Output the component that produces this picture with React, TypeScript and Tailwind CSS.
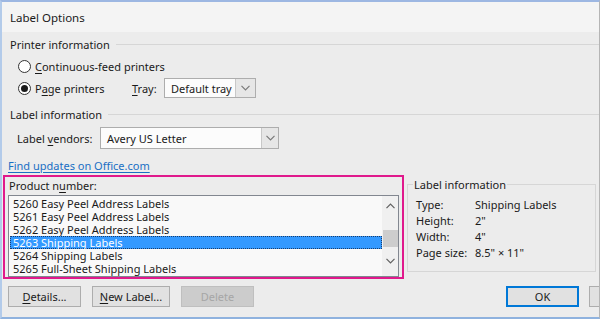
import React from 'react';

const font = { fontFamily: '"Noto Sans", "Liberation Sans", sans-serif' };

function Chevron({ dir = 'down', className = '' }: { dir?: 'up' | 'down'; className?: string }) {
  return (
    <svg width="9" height="6" viewBox="0 0 9 6" className={className}>
      {dir === 'down' ? (
        <polyline points="0.5,0.8 4.5,4.8 8.5,0.8" fill="none" stroke="currentColor" strokeWidth="1.2" />
      ) : (
        <polyline points="0.5,5.2 4.5,1.2 8.5,5.2" fill="none" stroke="currentColor" strokeWidth="1.2" />
      )}
    </svg>
  );
}

function Radio({ checked }: { checked?: boolean }) {
  return (
    <span className="flex h-[13px] w-[13px] items-center justify-center rounded-full border border-[#333333] bg-white">
      {checked && <span className="h-[7px] w-[7px] rounded-full bg-[#1a1a1a]" />}
    </span>
  );
}

function Select({ value, width, arrow }: { value: string; width: string; arrow: string }) {
  return (
    <div className={`flex h-full items-stretch border border-[#adadad] bg-[#fcfcfc] ${width}`}>
      <span className="flex flex-1 items-center whitespace-nowrap pl-[6px] text-[#1a1a1a]">{value}</span>
      <span className={`flex items-center justify-center border-l border-[#c8c8c8] bg-[#e6e6e6] text-[#7a7a7a] ${arrow}`}>
        <Chevron />
      </span>
    </div>
  );
}

function GroupHeader({ title }: { title: string }) {
  return (
    <div className="flex h-[18px] items-center pl-[8px]">
      <span className="text-[#1a1a1a]">{title}</span>
      <span className="ml-[6px] h-px flex-1 bg-[#d6d6d6]" />
    </div>
  );
}

function Button({ children, disabled, primary, width }: { children?: React.ReactNode; disabled?: boolean; primary?: boolean; width: string }) {
  const cls = disabled
    ? 'border border-[#bfbfbf] bg-[#cccccc] text-[#a6a6a6]'
    : primary
    ? 'border-2 border-[#0078d7] bg-[#e1e1e1] text-[#1a1a1a]'
    : 'border border-[#adadad] bg-[#e1e1e1] text-[#1a1a1a]';
  return (
    <div className={`flex h-[21px] shrink-0 items-center justify-center ${width} ${cls}`}>{children}</div>
  );
}

const products = [
  '5260 Easy Peel Address Labels',
  '5261 Easy Peel Address Labels',
  '5262 Easy Peel Address Labels',
  '5263 Shipping Labels',
  '5264 Shipping Labels',
  '5265 Full-Sheet Shipping Labels',
];

export default function App() {
  return (
    <div
      className="flex h-[319px] w-[600px] flex-col overflow-hidden border-t-2 border-l-2 border-r border-b-2 border-t-[#9db7e2] border-l-[#b3cbea] border-r-[#b5b5b5] border-b-[#8fb2de] bg-[#ececec] text-[11px] leading-[15px]"
      style={font}
    >
      {/* title bar */}
      <div className="flex h-[30px] shrink-0 items-center bg-[#f4f4f4] pl-[8px] text-[11.5px] text-[#1a1a1a]">
        Label Options
      </div>

      <div className="flex flex-1 flex-col">
        <div className="mt-[3px]">
          <GroupHeader title="Printer information" />
        </div>

        <div className="mt-[4px] flex h-[18px] items-center pl-[16px]">
          <Radio />
          <span className="ml-[4px] text-[#1a1a1a]">
            <span className="underline underline-offset-2">C</span>ontinuous-feed printers
          </span>
        </div>

        <div className="mt-[3px] flex h-[20px] items-center pl-[16px]">
          <Radio checked />
          <span className="ml-[4px] w-[97px] text-[#1a1a1a]">
            P<span className="underline underline-offset-2">a</span>ge printers
          </span>
          <span className="w-[32px] text-[#1a1a1a]">
            <span className="underline underline-offset-2">T</span>ray:
          </span>
          <div className="h-[20px]">
            <Select value="Default tray" width="w-[92px]" arrow="w-[20px]" />
          </div>
        </div>

        <div className="mt-[7px]">
          <GroupHeader title="Label information" />
        </div>

        <div className="mt-[4px] flex h-[22px] items-center pl-[15px]">
          <span className="w-[83px] text-[#1a1a1a]">
            Label <span className="underline underline-offset-2">v</span>endors:
          </span>
          <div className="h-[22px]">
            <Select value="Avery US Letter" width="w-[179px]" arrow="w-[17px]" />
          </div>
        </div>

        <div className="mt-[8px] flex h-[16px] items-center pl-[6px]">
          <span className="text-[#1a6fc4] underline underline-offset-2">Find updates on Office.com</span>
        </div>

        <div className="mt-[2px] flex h-[104px] items-start">
          {/* highlighted product list */}
          <div className="ml-[1px] flex h-[104px] w-[401px] flex-col border-2 border-[#e0198c] px-[3px]">
            <div className="flex h-[16px] items-center pl-[1px] pt-[1px] text-[#1a1a1a]">
              Product n<span className="underline underline-offset-2">u</span>mber:
            </div>
            <div className="mt-[2px] flex h-[82px] w-[391px] border border-[#828790] bg-[#f9f9f9]">
              <div className="flex flex-1 flex-col pl-[1px] pt-[1px]">
                {products.map((p, i) =>
                  i === 3 ? (
                    <div
                      key={p}
                      className="flex h-[13px] items-center whitespace-nowrap border border-dotted border-[#1a3d6b] bg-[#3399ff] pl-[2px] leading-[13px] text-white"
                    >
                      {p}
                    </div>
                  ) : (
                    <div key={p} className="flex h-[13px] items-center whitespace-nowrap pl-[3px] leading-[13px] text-[#1a1a1a]">
                      {p}
                    </div>
                  )
                )}
              </div>
              <div className="flex w-[16px] flex-col items-center bg-[#f0f0f0] text-[#606060]">
                <div className="flex h-[18px] items-center justify-center pt-[2px]">
                  <Chevron dir="up" />
                </div>
                <div className="mt-[16px] h-[17px] w-[15px] bg-[#cdcdcd]" />
                <div className="flex flex-1 items-center justify-center pb-[1px]">
                  <Chevron />
                </div>
              </div>
            </div>
          </div>

          {/* label information group */}
          <div className="ml-[3px] mr-[3px] mt-[9px] flex h-[88px] flex-1 flex-col border border-[#d6d6d6]">
            <div className="-mt-[9px] ml-[5px] flex h-[16px] w-fit items-center bg-[#ececec] px-[1px] text-[#1a1a1a]">
              Label information
            </div>
            <div className="mt-[4px] flex flex-col pl-[8px] text-[#1a1a1a]">
              {[
                ['Type:', 'Shipping Labels'],
                ['Height:', '2"'],
                ['Width:', '4"'],
                ['Page size:', '8.5" × 11"'],
              ].map(([k, v]) => (
                <div key={k} className="flex h-[16px] items-center">
                  <span className="w-[59px]">{k}</span>
                  <span>{v}</span>
                </div>
              ))}
            </div>
          </div>
        </div>

        <div className="mt-[7px] flex items-center pl-[6px]">
          <Button width="w-[73px]">
            <span>
              <span className="underline underline-offset-2">D</span>etails...
            </span>
          </Button>
          <div className="ml-[11px]">
            <Button width="w-[78px]">
              <span>
                <span className="underline underline-offset-2">N</span>ew Label...
              </span>
            </Button>
          </div>
          <div className="ml-[11px]">
            <Button width="w-[73px]" disabled>
              Delete
            </Button>
          </div>
          <div className="ml-[252px]">
            <Button width="w-[73px]" primary>
              OK
            </Button>
          </div>
          <div className="ml-[10px]">
            <Button width="w-[73px]" />
          </div>
        </div>
      </div>
    </div>
  );
}
